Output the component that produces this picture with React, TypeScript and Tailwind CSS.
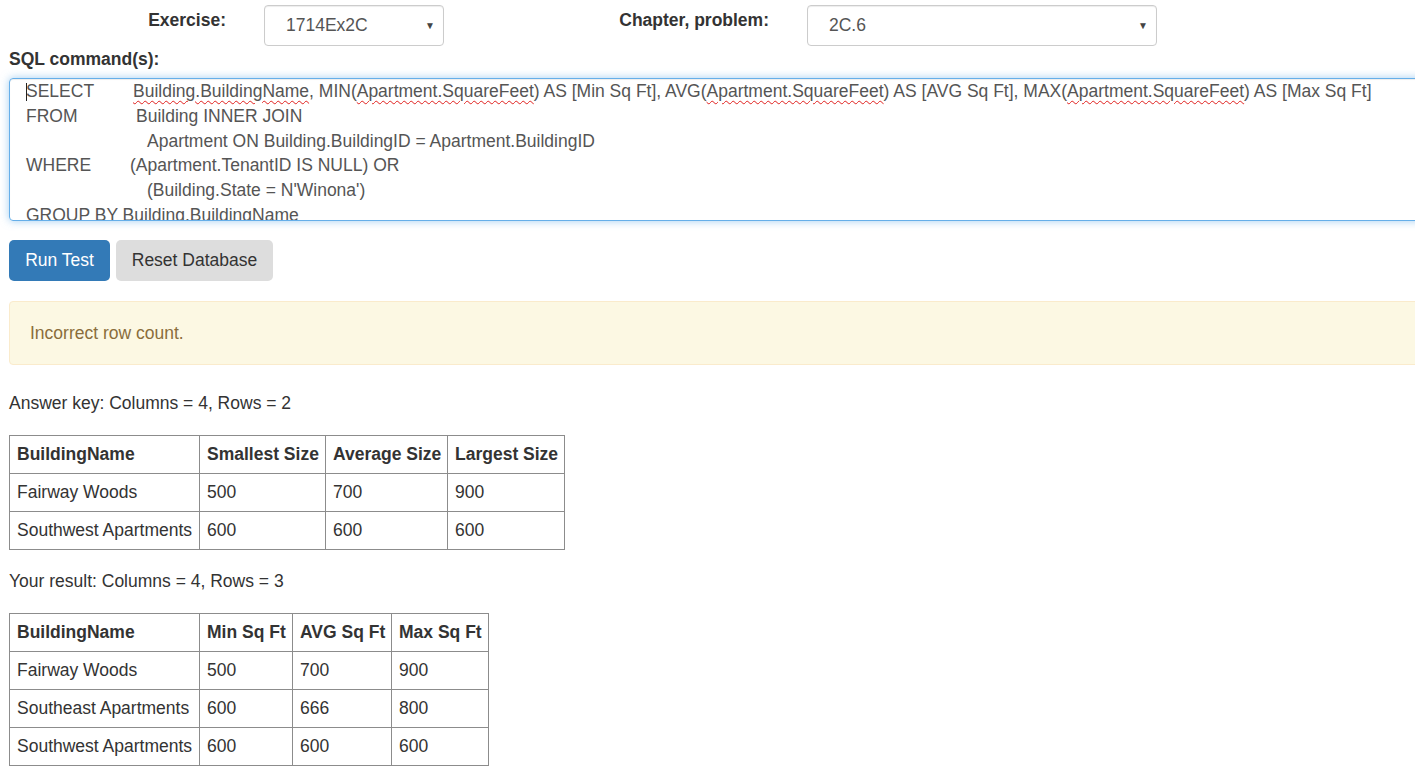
import React from "react";

const font = "font-['Liberation_Sans',Arial,sans-serif]";

const answerKey = {
	width: "w-[555px]",
	headers: ["BuildingName", "Smallest Size", "Average Size", "Largest Size"],
	widths: ["w-[190px]", "w-[126px]", "w-[122px]", "w-[117px]"],
	rows: [
		["Fairway Woods", "500", "700", "900"],
		["Southwest Apartments", "600", "600", "600"],
	],
};

const yourResult = {
	width: "w-[479px]",
	headers: ["BuildingName", "Min Sq Ft", "AVG Sq Ft", "Max Sq Ft"],
	widths: ["w-[190px]", "w-[93px]", "w-[99px]", "w-[97px]"],
	rows: [
		["Fairway Woods", "500", "700", "900"],
		["Southeast Apartments", "600", "666", "800"],
		["Southwest Apartments", "600", "600", "600"],
	],
};

function Misspelled({ children }: { children: React.ReactNode }) {
	return (
		<span className="underline decoration-wavy decoration-[#e0201e] decoration-1 underline-offset-[3px]">
			{children}
		</span>
	);
}

function Select({ value, width }: { value: string; width: string }) {
	return (
		<div
			className={`${width} h-[41px] flex items-center justify-between border border-[#ccc] rounded-[4px] pl-[21px] pr-[8px] bg-white text-[17.5px] text-[#555] shadow-[inset_0_1px_1px_rgba(0,0,0,0.075)]`}
		>
			<span>{value}</span>
			<span className="text-[10px] text-[#444]">▼</span>
		</div>
	);
}

function ResultTable({ data }: { data: typeof answerKey }) {
	return (
		<table className={`${data.width} table-fixed border-collapse text-[17.5px] text-[#333]`}>
			<thead>
				<tr>
					{data.headers.map((h, i) => (
						<th
							key={h}
							className={`${data.widths[i]} h-[38px] border border-[#8c8c8c] pl-[7px] pr-0 text-left font-bold whitespace-nowrap`}
						>
							{h}
						</th>
					))}
				</tr>
			</thead>
			<tbody>
				{data.rows.map((row) => (
					<tr key={row[0]}>
						{row.map((c, i) => (
							<td
								key={i}
								className="h-[38px] border border-[#8c8c8c] pl-[7px] pr-0 whitespace-nowrap"
							>
								{c}
							</td>
						))}
					</tr>
				))}
			</tbody>
		</table>
	);
}

export default function App() {
	return (
		<div className={`${font} w-[1415px] h-[772px] overflow-hidden bg-white text-[#333] text-[17.5px]`}>
			<div className="w-[1440px] pl-[9px]">
				{/* exercise / chapter pickers */}
				<div className="flex items-start pt-[5px]">
					<div className="w-[217px] text-right font-bold pt-[2px]">Exercise:</div>
					<div className="ml-[38px]">
						<Select value="1714Ex2C" width="w-[180px]" />
					</div>
					<div className="w-[325px] text-right font-bold pt-[2px]">Chapter, problem:</div>
					<div className="ml-[38px]">
						<Select value="2C.6" width="w-[350px]" />
					</div>
				</div>

				<div className="font-bold mt-[3px] leading-[20px]">SQL command(s):</div>

				{/* sql editor */}
				<div className="mt-[9px] h-[143px] w-[1420px] border border-[#66afe9] rounded-[4px] shadow-[inset_0_1px_1px_rgba(0,0,0,0.075),0_0_8px_rgba(102,175,233,0.6)] overflow-hidden pl-[16px] text-[17.5px] leading-[24.8px] text-[#555] whitespace-nowrap">
					<div className="flex relative">
						<span className="absolute left-0 top-[4px] h-[18px] w-px bg-[#222]" />
						<span className="w-[107px] shrink-0">SELECT</span>
						<span>
							<Misspelled>Building.BuildingName</Misspelled>, MIN(<Misspelled>Apartment.SquareFeet</Misspelled>) AS [Min Sq Ft], AVG(
							<Misspelled>Apartment.SquareFeet</Misspelled>) AS [AVG Sq Ft], MAX(<Misspelled>Apartment.SquareFeet</Misspelled>) AS [Max Sq Ft]
						</span>
					</div>
					<div className="flex">
						<span className="w-[110px] shrink-0">FROM</span>
						<span>Building INNER JOIN</span>
					</div>
					<div className="pl-[121px]">Apartment ON Building.BuildingID = Apartment.BuildingID</div>
					<div className="flex">
						<span className="w-[104px] shrink-0">WHERE</span>
						<span>(Apartment.TenantID IS NULL) OR</span>
					</div>
					<div className="pl-[121px]">(Building.State = N'Winona')</div>
					<div>GROUP BY Building.BuildingName</div>
				</div>

				{/* actions */}
				<div className="flex gap-[6px] mt-[19px]">
					<button className="h-[41px] w-[101px] rounded-[5px] bg-[#337ab7] text-white text-[17.5px]">
						Run Test
					</button>
					<button className="h-[41px] w-[157px] rounded-[5px] bg-[#ddd] text-[#333] text-[17.5px]">
						Reset Database
					</button>
				</div>

				<div className="mt-[20px] w-[1420px] h-[64px] flex items-center pl-[20px] bg-[#fcf8e3] border border-[#faebcc] rounded-[4px] text-[#8a6d3b]">
					Incorrect row count.
				</div>

				<div className="mt-[28px] leading-[20px]">Answer key: Columns = 4, Rows = 2</div>
				<div className="mt-[22px]">
					<ResultTable data={answerKey} />
				</div>

				<div className="mt-[21px] leading-[20px]">Your result: Columns = 4, Rows = 3</div>
				<div className="mt-[22px]">
					<ResultTable data={yourResult} />
				</div>
			</div>
		</div>
	);
}
